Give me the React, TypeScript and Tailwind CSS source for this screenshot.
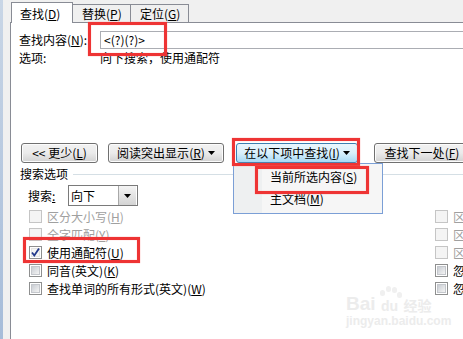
import type { ReactNode } from "react";

const FONT = "font-['Noto_Sans_CJK_SC','Noto_Sans',sans-serif]";

// mnemonic letter, windows style: (X) with the letter underlined
function K({ k }: { k: string }) {
  return (
    <>
      (<span className="underline underline-offset-1">{k}</span>)
    </>
  );
}

function Arrow() {
  return (
    <svg width="7" height="4" viewBox="0 0 7 4" className="shrink-0">
      <path d="M0 0h7L3.5 4z" fill="#000" />
    </svg>
  );
}

function Btn({ w, hot, children }: { w: string; hot?: boolean; children: ReactNode }) {
  return (
    <div
      className={`${w} h-[20px] shrink-0 rounded-[3px] border flex items-center justify-center gap-[3px] whitespace-nowrap ${
        hot
          ? "border-[#3c7fb1] bg-linear-to-b from-[#eaf6fd] via-[#d9f0fc] to-[#a7d9f5]"
          : "border-[#707070] bg-linear-to-b from-[#f2f2f2] via-[#ebebeb] to-[#d2d2d2] shadow-[inset_0_0_0_1px_#fcfcfc]"
      }`}
    >
      {children}
    </div>
  );
}

type BoxState = "off" | "on" | "dis";

function Box({ state }: { state: BoxState }) {
  if (state === "dis") {
    return <span className="w-[13px] h-[13px] shrink-0 border border-[#c5c5c5] bg-[#f4f4f4]" />;
  }
  return (
    <span className="relative w-[13px] h-[13px] shrink-0 border border-[#8e8f8f] bg-white p-[1px] flex">
      <span
        className={`flex-1 border ${
          state === "on"
            ? "border-[#e4e4e4] bg-[#f4f4f4]"
            : "border-[#c4c7cc] bg-linear-to-br from-[#c9cdd3] to-[#f4f4f4]"
        }`}
      />
      {state === "on" && (
        <svg width="13" height="13" viewBox="0 0 13 13" className="absolute -left-px -top-px">
          <path d="M3 6.5 L5.3 9.5 L10 2.5" fill="none" stroke="#22388a" strokeWidth="1.8" />
        </svg>
      )}
    </span>
  );
}

function Check({ state, children }: { state: BoxState; children: ReactNode }) {
  return (
    <div
      className={`h-[13px] flex items-center gap-[5px] whitespace-nowrap ${
        state === "dis" ? "text-[#a0a0a0]" : "text-black"
      }`}
    >
      <Box state={state} />
      <span>{children}</span>
    </div>
  );
}

function RedBox({ cls }: { cls: string }) {
  return (
    <div
      className={`absolute border-[3px] border-[#ee3434] shadow-[0_0_1px_#f88,inset_0_0_1px_#f88] ${cls}`}
    />
  );
}

export default function App() {
  return (
    <div
      className={`relative w-[463px] h-[339px] overflow-hidden flex bg-[#f0f0f0] text-[12px] leading-[14px] text-black ${FONT}`}
    >
      <div className="w-[3px] bg-linear-to-b from-[#c9d6e6] to-[#a6bcd9]" />
      <div className="w-[7px]" />

      <div className="flex-1 min-w-0 flex flex-col">
        {/* tabs */}
        <div className="h-[22px] flex items-end pl-px">
          <div className="relative z-10 -mb-px h-[21px] w-[62px] bg-white border border-b-0 border-[#898c95] pl-[8px] pt-[4px] whitespace-nowrap">
            查找<K k="D" />
          </div>
          <div className="h-[18px] w-[58px] border border-l-0 border-b-0 border-[#898c95] pl-[9px] pt-[2px] whitespace-nowrap">
            替换<K k="P" />
          </div>
          <div className="h-[18px] w-[58px] border border-l-0 border-b-0 border-[#898c95] pl-[9px] pt-[2px] whitespace-nowrap">
            定位<K k="G" />
          </div>
        </div>

        {/* tab page */}
        <div className="flex-1 bg-white border-l border-t border-[#898c95] flex flex-col">
          <div className="mt-[8px] h-[18px] flex items-center">
            <span className="w-[89px] pl-[8px] shrink-0 whitespace-nowrap">
              查找内容<K k="N" />:
            </span>
            <div className="flex-1 h-[18px] border border-r-0 border-[#abadb3] pl-[3px] flex items-center">
              &lt;(?)(?)&gt;
            </div>
          </div>

          <div className="mt-[2px] h-[14px] flex items-center">
            <span className="w-[89px] pl-[8px] shrink-0">选项:</span>
            <span>向下搜索，使用通配符</span>
          </div>

          {/* buttons */}
          <div className="mt-[78px] h-[20px] flex pl-[10px]">
            <Btn w="w-[77px]">
              <span>&lt;&lt; 更少<K k="L" /></span>
            </Btn>
            <div className="ml-[10px]">
              <Btn w="w-[116px]">
                <span>阅读突出显示<K k="R" /></span>
                <Arrow />
              </Btn>
            </div>
            <div className="ml-[12px]">
              <Btn w="w-[122px]" hot>
                <span>在以下项中查找<K k="I" /></span>
                <Arrow />
              </Btn>
            </div>
            <div className="ml-[16px]">
              <Btn w="w-[96px]">
                <span>查找下一处<K k="F" /></span>
              </Btn>
            </div>
          </div>

          {/* group header */}
          <div className="mt-[4px] h-[14px] flex items-center pl-[9px]">
            <span className="whitespace-nowrap">搜索选项</span>
            <div className="ml-[5px] flex-1 h-px bg-[#d5dfe5]" />
          </div>

          <div className="mt-[4px] h-[21px] flex items-center pl-[17px]">
            <span className="w-[40px] shrink-0">
              搜索<span className="underline">:</span>
            </span>
            <div className="w-[70px] h-[21px] border border-[#7a7a7a] bg-white flex items-center">
              <span className="flex-1 pl-[2px]">向下</span>
              <div className="w-[18px] h-[19px] mr-px border-l border-[#a8a8a8] bg-linear-to-b from-[#f4f4f4] to-[#d4d4d4] flex items-center justify-center">
                <Arrow />
              </div>
            </div>
          </div>

          {/* check boxes */}
          <div className="mt-[4px] flex pl-[18px]">
            <div className="w-[406px] shrink-0 flex flex-col gap-[5px]">
              <Check state="dis">
                区分大小写<K k="H" />
              </Check>
              <Check state="dis">
                全字匹配<K k="Y" />
              </Check>
              <Check state="on">
                使用通配符<K k="U" />
              </Check>
              <Check state="off">
                同音(英文)<K k="K" />
              </Check>
              <Check state="off">
                查找单词的所有形式(英文)<K k="W" />
              </Check>
            </div>
            <div className="flex flex-col gap-[5px]">
              <Check state="dis">
                区分前缀<K k="X" />
              </Check>
              <Check state="dis">
                区分后缀<K k="T" />
              </Check>
              <Check state="dis">
                区分全/半角<K k="M" />
              </Check>
              <Check state="off">
                忽略标点符号<K k="S" />
              </Check>
              <Check state="off">
                忽略空格<K k="W" />
              </Check>
            </div>
          </div>
        </div>
      </div>

      {/* dropdown menu of 在以下项中查找 */}
      <div className="absolute left-[233px] top-[163px] w-[150px] h-[51px] border border-[#7b9fd6] bg-[#f6f6f6] flex z-20">
        <div className="w-[28px] bg-[#eef0f1]" />
        <div className="flex-1 flex flex-col pt-[2px] pl-[8px]">
          <div className="h-[22px] flex items-center">
            当前所选内容(<span className="underline">S</span>)
          </div>
          <div className="h-[22px] flex items-center">
            主文档(<span className="underline">M</span>)
          </div>
        </div>
      </div>

      {/* red marks */}
      <RedBox cls="left-[88px] top-[22px] w-[79px] h-[34px] z-30" />
      <RedBox cls="left-[232px] top-[138px] w-[128px] h-[28px] z-30" />
      <RedBox cls="left-[255px] top-[166px] w-[114px] h-[28px] z-30" />
      <RedBox cls="left-[23px] top-[237px] w-[117px] h-[26px] z-30" />

      {/* faint watermark */}
      <div className="absolute left-[346px] top-[284px] flex flex-col items-start text-[#ececec] font-['Liberation_Sans',sans-serif]">
        <div className="h-[29px] flex items-end gap-[1px] leading-none">
          <span className="text-[19px] font-bold">Bai</span>
          <span className="relative w-[26px] h-[27px] flex items-end justify-center">
            <span className="absolute left-[3px] top-[4px] w-[5px] h-[6px] rounded-full bg-[#f0f0f0]" />
            <span className="absolute left-[9px] top-0 w-[5px] h-[6px] rounded-full bg-[#f0f0f0]" />
            <span className="absolute left-[15px] top-[1px] w-[5px] h-[6px] rounded-full bg-[#f0f0f0]" />
            <span className="absolute left-[20px] top-[6px] w-[5px] h-[6px] rounded-full bg-[#f0f0f0]" />
            <span className="text-[14px] font-bold">du</span>
          </span>
          <span className={`text-[14px] leading-[15px] font-bold ${FONT}`}>经验</span>
        </div>
        <span className="mt-[2px] text-[12px] leading-[13px] font-bold">jingyan.baidu.com</span>
      </div>
    </div>
  );
}
